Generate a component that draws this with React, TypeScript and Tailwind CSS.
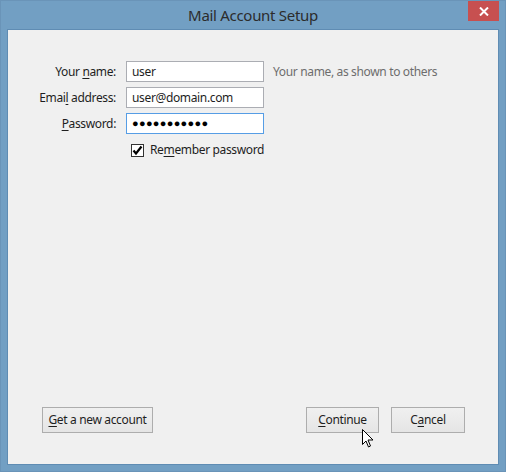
import React from "react";

const font = { fontFamily: '"Noto Sans", "Open Sans", sans-serif' };

function U({ children }: { children: React.ReactNode }) {
  return <span className="underline underline-offset-[2px] decoration-[1px]">{children}</span>;
}

function Btn({ children, w }: { children: React.ReactNode; w: string }) {
  return (
    <div
      className={`${w} h-[26px] flex items-center justify-center border border-[#adadad] bg-gradient-to-b from-[#f0f0f0] to-[#e5e5e5] text-[12px] tracking-[-0.35px] text-[#1e1e1e]`}
    >
      {children}
    </div>
  );
}

export default function App() {
  return (
    <div
      className="w-[506px] h-[472px] bg-[#729fc3] border border-[#6a94b8] flex flex-col relative"
      style={font}
    >
      <div className="h-[28px] relative flex items-center justify-center">
        <span className="text-[15px] text-[#2c2c2c] tracking-[-0.3px]">Mail Account Setup</span>
        <div className="absolute right-[6px] top-0 w-[31px] h-[20px] bg-[#c75050] flex items-center justify-center">
          <svg width="10" height="9" viewBox="0 0 10 9">
            <path d="M1 0.5 L9 8.5 M9 0.5 L1 8.5" stroke="white" strokeWidth="2" />
          </svg>
        </div>
      </div>
      <div className="mx-[6px] mb-[6px] flex-1 border border-[#5f8cb3] bg-[#f0f0f0] flex flex-col text-[12px] tracking-[-0.35px] text-[#1e1e1e]">
        <div className="pt-[31px] grid grid-cols-[108px_138px_auto] gap-x-[10px] gap-y-[5px] items-center">
          <div className="text-right">
            Your <U>n</U>ame:
          </div>
          <div className="h-[21px] border border-[#abadb3] bg-white flex items-center px-[5px]">user</div>
          <div className="text-[#6d6d6d] ml-[-1px]">Your name, as shown to others</div>

          <div className="text-right">
            Emai<U>l</U> address:
          </div>
          <div className="h-[21px] border border-[#abadb3] bg-white flex items-center px-[5px]">
            user@domain.com
          </div>
          <div />

          <div className="text-right">
            <U>P</U>assword:
          </div>
          <div className="h-[21px] border border-[#569de5] bg-white flex items-center px-[5px] text-[11px] tracking-[0.3px] text-black">
            ●●●●●●●●●●●
          </div>
          <div />
        </div>
        <div className="mt-[7px] ml-[123px] flex items-center gap-[6px]">
          <div className="w-[13px] h-[13px] border border-[#333333] bg-white flex items-center justify-center">
            <svg width="11" height="11" viewBox="0 0 11 11">
              <path d="M1.5 5.5 L4 8.5 L9.5 1.5" stroke="black" strokeWidth="2.2" fill="none" />
            </svg>
          </div>
          <span>
            Re<U>m</U>ember password
          </span>
        </div>
        <div className="flex-1" />
        <div className="flex items-center pl-[34px] pr-[33px] pb-[31px]">
          <Btn w="w-[111px]">
            <span>
              <U>G</U>et a new account
            </span>
          </Btn>
          <div className="flex-1" />
          <Btn w="w-[73px]">
            <span>
              <U>C</U>ontinue
            </span>
          </Btn>
          <div className="w-[12px]" />
          <Btn w="w-[74px]">
            <span>
              C<U>a</U>ncel
            </span>
          </Btn>
        </div>
      </div>
      <svg
        className="absolute left-[360px] top-[427px]"
        width="14"
        height="21"
        viewBox="0 0 14 21"
      >
        <path
          d="M1.5 1.5 L1.5 16.5 L5 13 L7.5 19 L9.5 18 L7 12 L12 12 Z"
          fill="white"
          stroke="black"
          strokeWidth="1"
          strokeLinejoin="miter"
        />
      </svg>
    </div>
  );
}
